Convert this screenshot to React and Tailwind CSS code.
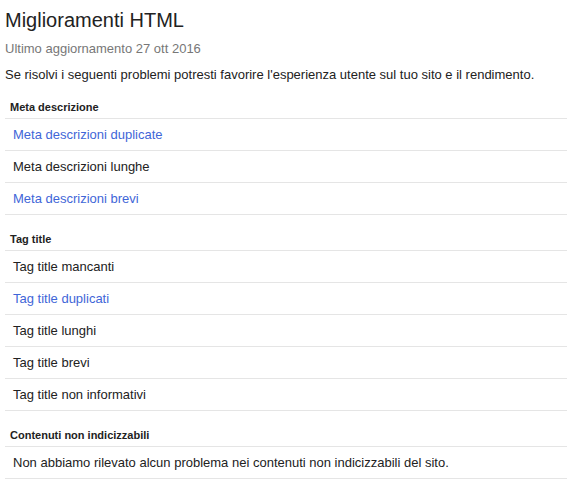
const sections = [
    {
        title: 'Meta descrizione',
        rows: [
            { label: 'Meta descrizioni duplicate', link: true },
            { label: 'Meta descrizioni lunghe' },
            { label: 'Meta descrizioni brevi', link: true },
        ],
    },
    {
        title: 'Tag title',
        rows: [
            { label: 'Tag title mancanti' },
            { label: 'Tag title duplicati', link: true },
            { label: 'Tag title lunghi' },
            { label: 'Tag title brevi' },
            { label: 'Tag title non informativi' },
        ],
    },
    {
        title: 'Contenuti non indicizzabili',
        rows: [
            { label: 'Non abbiamo rilevato alcun problema nei contenuti non indicizzabili del sito.' },
        ],
    },
];

const Section = ({ section }) => (
    <div className="flex flex-col">
        <div className="h-[36px] flex items-end pb-[3px] pl-[5px] border-b border-[#e5e5e5] text-[11px] font-bold text-[#222]">
            {section.title}
        </div>
        {section.rows.map((row) => (
            <div
                key={row.label}
                className="h-[32px] flex items-center pl-[8px] border-b border-[#e5e5e5] text-[13px]"
            >
                <span className={row.link ? 'text-[#3f66d8] cursor-pointer' : 'text-[#222]'}>{row.label}</span>
            </div>
        ))}
    </div>
);

export default function App() {
    return (
        <div className="w-[567px] min-h-[491px] bg-white pl-[5px] font-['Liberation_Sans',Arial,sans-serif]">
            <h1 className="mt-[8px] text-[20px] leading-[24px] text-[#222]">Miglioramenti HTML</h1>
            <div className="mt-[9px] text-[13px] leading-[16px] text-[#777]">Ultimo aggiornamento 27 ott 2016</div>
            <p className="mt-[10px] text-[13px] leading-[16px] text-[#222]">
                Se risolvi i seguenti problemi potresti favorire l'esperienza utente sul tuo sito e il rendimento.
            </p>
            {sections.map((s) => (
                <Section key={s.title} section={s} />
            ))}
        </div>
    );
}
